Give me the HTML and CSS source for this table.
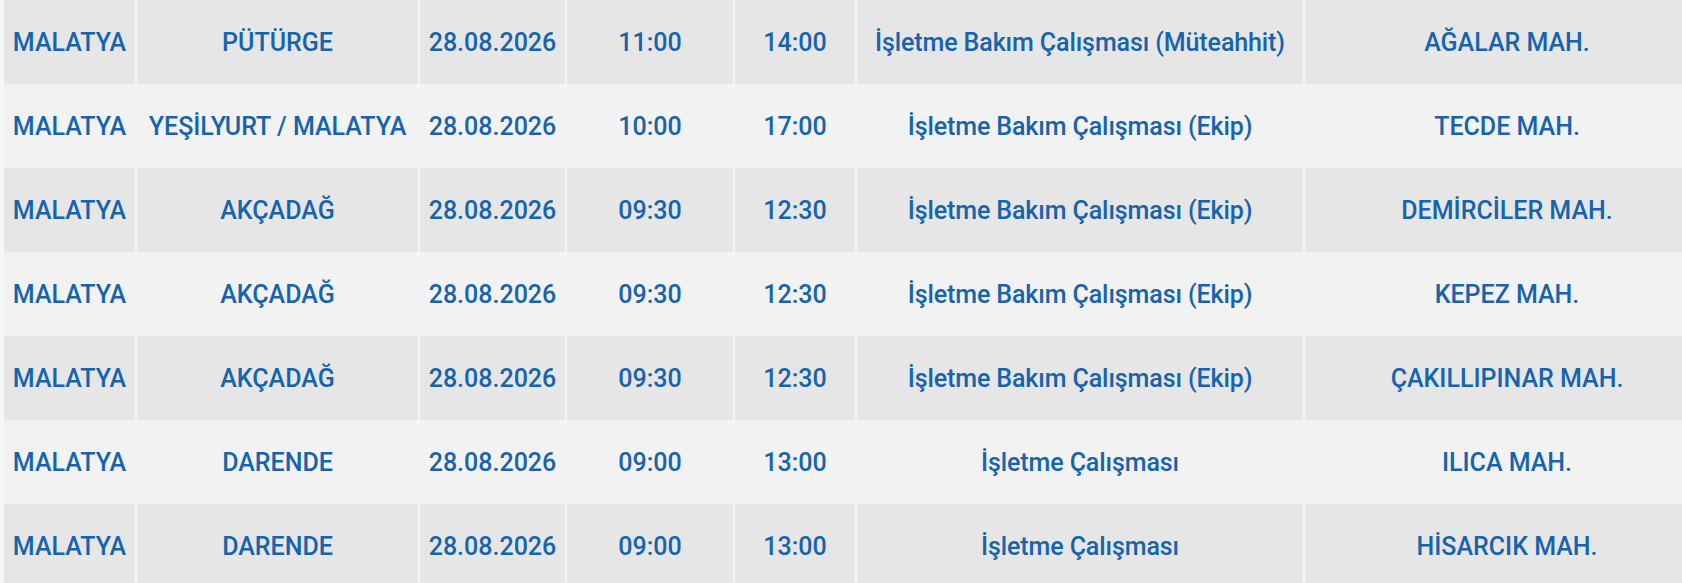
FILE: index.html
```html
<!DOCTYPE html>
<html lang="tr">
<head>
<meta charset="utf-8">
<title>Kesinti Listesi</title>
<link rel="stylesheet" href="styles.css">
</head>
<body>
<div class="wrap">
<table class="outages">
  <colgroup>
    <col class="c1"><col class="c2"><col class="c3"><col class="c4"><col class="c5"><col class="c6"><col class="c7">
  </colgroup>
  <tbody>
    <tr><td>MALATYA</td><td>PÜTÜRGE</td><td>28.08.2026</td><td>11:00</td><td>14:00</td><td class="desc">İşletme Bakım Çalışması (Müteahhit)</td><td>AĞALAR MAH.</td></tr>
    <tr><td>MALATYA</td><td>YEŞİLYURT / MALATYA</td><td>28.08.2026</td><td>10:00</td><td>17:00</td><td class="desc">İşletme Bakım Çalışması (Ekip)</td><td>TECDE MAH.</td></tr>
    <tr><td>MALATYA</td><td>AKÇADAĞ</td><td>28.08.2026</td><td>09:30</td><td>12:30</td><td class="desc">İşletme Bakım Çalışması (Ekip)</td><td>DEMİRCİLER MAH.</td></tr>
    <tr><td>MALATYA</td><td>AKÇADAĞ</td><td>28.08.2026</td><td>09:30</td><td>12:30</td><td class="desc">İşletme Bakım Çalışması (Ekip)</td><td>KEPEZ MAH.</td></tr>
    <tr><td>MALATYA</td><td>AKÇADAĞ</td><td>28.08.2026</td><td>09:30</td><td>12:30</td><td class="desc">İşletme Bakım Çalışması (Ekip)</td><td>ÇAKILLIPINAR MAH.</td></tr>
    <tr><td>MALATYA</td><td>DARENDE</td><td>28.08.2026</td><td>09:00</td><td>13:00</td><td class="desc">İşletme Çalışması</td><td>ILICA MAH.</td></tr>
    <tr><td>MALATYA</td><td>DARENDE</td><td>28.08.2026</td><td>09:00</td><td>13:00</td><td class="desc">İşletme Çalışması</td><td>HİSARCIK MAH.</td></tr>
  </tbody>
</table>
</div>
</body>
</html>
```

FILE: styles.css
```css
html, body {
  margin: 0;
  padding: 0;
  background: #f6f6f6;
  overflow: hidden;
}

.wrap {
  padding-left: 4px;
  width: 1720px;
}

.outages {
  border-collapse: collapse;
  table-layout: fixed;
  width: 1706px;
  font-family: Roboto, "Liberation Sans", sans-serif;
  font-size: 25px;
  font-weight: 500;
  color: #1663ae;
}

.c1 { width: 132px; }
.c2 { width: 283px; }
.c3 { width: 147px; }
.c4 { width: 168px; }
.c5 { width: 122px; }
.c6 { width: 448px; }
.c7 { width: 406px; }

.outages td {
  height: 84px;
  padding: 0;
  text-align: center;
  vertical-align: middle;
  white-space: nowrap;
  border-right: 2px solid #f1f4f8;
  box-sizing: border-box;
}

.outages tr:nth-child(odd) td { background: #e6e6e6; }
.outages tr:nth-child(even) td { background: #f2f2f2; }

.outages td.desc {
  letter-spacing: -0.1px;
}
```
